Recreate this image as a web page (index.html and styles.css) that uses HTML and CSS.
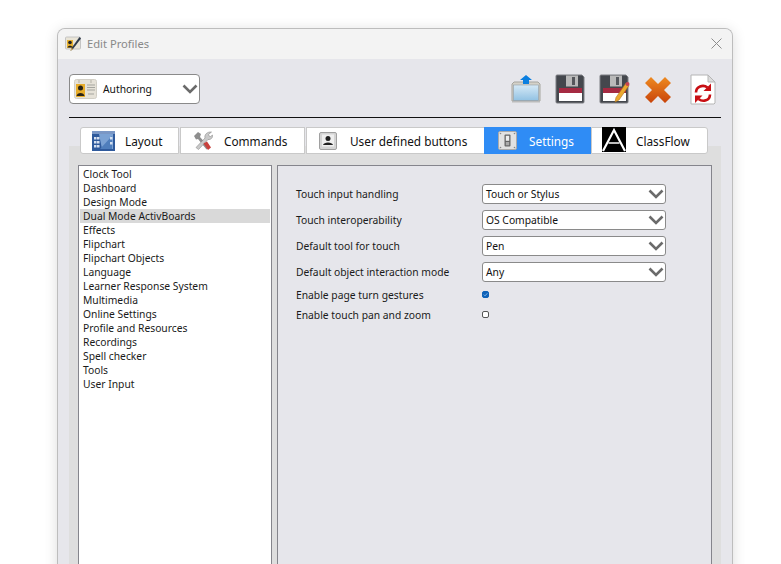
FILE: index.html
```html
<!DOCTYPE html>
<html lang="en">
<head>
<meta charset="utf-8">
<title>Edit Profiles</title>
<link rel="stylesheet" href="styles.css">
</head>
<body>
<div class="window">
  <header class="titlebar">
    <svg class="title-icon" width="17" height="17" viewBox="0 0 17 17"><rect x="0.5" y="2" width="15" height="12" rx="1" fill="#e9e4d6" stroke="#c4c4c4"/><rect x="2" y="5" width="6" height="8" fill="#e8b230"/><circle cx="5" cy="7.500" r="1.800" fill="#222"/><path d="M2.500 12.500c.4-2.400 4.600-2.400 5 0z" fill="#222"/><path d="M14.500 2 16 3.500 8 14 5.500 16 6.500 13z" fill="#2f3a4a"/><path d="M6.500 13 5.500 16 8 14z" fill="#e2b04a"/></svg>
    <span class="title-text">Edit Profiles</span>
    <svg class="close" width="11" height="11" viewBox="0 0 11 11"><path d="M.5.5l10 10M10.500.5l-10 10" stroke="#8c8c8c" stroke-width="1" fill="none"/></svg>
  </header>
  <div class="content">
    <div class="toolbar">
      <div class="combo">
        <svg class="combo-icon" width="23" height="20" viewBox="0 0 23 20"><rect x=".5" y=".5" width="22" height="19" rx="2" fill="#e6e2d8" stroke="#d2cfc6"/><rect x="2" y="5" width="9" height="13" fill="#e8ad2a"/><circle cx="6.500" cy="9" r="2.500" fill="#2a2418"/><path d="M2.500 17c.5-4 7.500-4 8 0z" fill="#2a2418"/><path d="M13 6h8M13 8.500h8M13 11h8M14 15h6" stroke="#a5a59f" fill="none"/><path d="M5 1v3M17 1v3" stroke="#b3b0a6" fill="none"/></svg>
        <span class="combo-text">Authoring</span>
        <svg class="chev" width="16" height="10" viewBox="0 0 16 10"><path d="M1.500 1.500 8 8l6.500-6.500" fill="none" stroke="#6b6b6b" stroke-width="2.600"/></svg>
      </div>
      <div class="actions">
        <svg class="a1" width="30" height="28" viewBox="0 0 30 28"><defs><linearGradient id="fold" x1="0" y1="0" x2="0" y2="1"><stop offset="0" stop-color="#d6e9f6"/><stop offset="1" stop-color="#92c2e3"/></linearGradient></defs><path d="M3 7h24l2 2v17H1V9z" fill="#d4d1c8" stroke="#a5a59f"/><rect x="2.500" y="10" width="25" height="15.500" fill="url(#fold)" stroke="#8f9ca5" stroke-width=".6"/><path d="M15 0l6 5h-3v4h-6V5H9z" fill="#0b7fe0"/><rect x="1" y="26" width="28" height="1.500" fill="#bbb"/></svg>
        <svg class="a2" width="30" height="30" viewBox="0 0 30 30"><path d="M2 1h25l2 2v25a1 1 0 0 1-1 1H2a1 1 0 0 1-1-1V2a1 1 0 0 1 1-1z" fill="#44474d" stroke="#7d7f83"/><rect x="11" y="1.500" width="12" height="11" fill="#b9b9b9"/><rect x="17" y="3" width="3" height="8" fill="#55575c"/><rect x="4" y="14" width="23" height="13" fill="#fff"/><rect x="4" y="14" width="23" height="5" fill="#a52a42"/></svg>
        <svg class="a3" width="31" height="30" viewBox="0 0 31 30"><path d="M2 1h25l2 2v25a1 1 0 0 1-1 1H2a1 1 0 0 1-1-1V2a1 1 0 0 1 1-1z" fill="#44474d" stroke="#7d7f83"/><rect x="11" y="1.500" width="12" height="11" fill="#b9b9b9"/><rect x="17" y="3" width="3" height="8" fill="#55575c"/><rect x="4" y="14" width="23" height="13" fill="#fff"/><rect x="4" y="14" width="23" height="5" fill="#a52a42"/><path d="M27 9l3 2.500L20 26l-4 2 1-4.500z" fill="#eba92f" stroke="#a9701b" stroke-width=".6"/><circle cx="28.500" cy="10" r="2" fill="#c8434f"/></svg>
        <svg class="a4" width="28" height="28" viewBox="0 0 28 28"><defs><linearGradient id="x" x1="0" y1="0" x2="0" y2="1"><stop offset="0" stop-color="#ee8a20"/><stop offset="1" stop-color="#c8440a"/></linearGradient></defs><path d="M7 1l7 7 7-7 6 6-7 7 7 7-6 6-7-7-7 7-6-6 7-7-7-7z" fill="url(#x)"/></svg>
        <svg class="a5" width="26" height="31" viewBox="0 0 26 31"><path d="M1 1h17l7 7v21l-1 1H1z" fill="#fff" stroke="#b5b5b5"/><path d="M18 1v7h7z" fill="#dcdcdc" stroke="#b5b5b5"/><path d="M6 18.500c0-6 7-8.500 11.500-5" fill="none" stroke="#c80f14" stroke-width="2.600"/><path d="M21 9.500v7.500h-7.500z" fill="#c80f14"/><path d="M20 20.500c0 6-7 8-11.500 4.500" fill="none" stroke="#c80f14" stroke-width="2.600"/><path d="M5 29v-7.500h7.500z" fill="#c80f14"/></svg>
      </div>
    </div>
    <div class="rule"></div>
    <nav class="tabs">
      <div class="tab t-layout">
        <svg width="23" height="20" viewBox="0 0 23 20"><rect width="23" height="20" fill="#2f5a9c"/><rect width="23" height="3" fill="#7a97c5"/><path d="M7 3h14v15H10z" fill="#7ba2d4"/><path d="M8 18 20 5v13z" fill="#4f7ebc"/><g fill="#d5e0f0"><rect x="2" y="6" width="2.500" height="2.500"/><rect x="5" y="6" width="2.500" height="2.500"/><rect x="2" y="10" width="2.500" height="2.500"/><rect x="5" y="10" width="2.500" height="2.500"/><rect x="2" y="14" width="2.500" height="2.500"/><rect x="5" y="14" width="2.500" height="2.500"/><rect x="18" y="6" width="2.500" height="2.500"/><rect x="18" y="11" width="2.500" height="2.500"/></g></svg>
        <span>Layout</span>
      </div>
      <div class="tab t-commands">
        <svg width="20" height="20" viewBox="0 0 20 20"><path d="M1 5l4-4 3 2-1 3 9 10-2.500 2.500L5 8 3 8.500z" fill="#8e8e8e"/><path d="M18.500 1 15.500 3.500l.5 1.500 1.500.5L19.500 4c.6 2.500-1.500 5-4.500 4.500L5.500 18.500 3 16.500 12 7c-1-3 2-6.500 6.500-6z" fill="#c9c9c9" stroke="#7d7d7d" stroke-width=".5"/><path d="M10.500 12.500 15 19l3-2.500-4-6z" fill="#c9403c"/></svg>
        <span>Commands</span>
      </div>
      <div class="tab t-user">
        <svg width="18" height="18" viewBox="0 0 18 18"><rect x=".5" y=".5" width="17" height="17" rx="1.500" fill="#d4d4d4" stroke="#a0a0a0"/><rect x="3" y="2.500" width="12" height="12" fill="#efefef"/><circle cx="9" cy="6.500" r="2.500" fill="#222"/><path d="M4 13c.6-3.500 9.400-3.500 10 0z" fill="#222"/></svg>
        <span>User defined buttons</span>
      </div>
      <div class="tab t-settings">
        <svg width="19" height="19" viewBox="0 0 19 19"><rect x=".5" y=".5" width="18" height="18" rx="1.500" fill="#e2e2e2" stroke="#aaa"/><g fill="#888"><circle cx="2.500" cy="2.500" r=".8"/><circle cx="16.500" cy="2.500" r=".8"/><circle cx="2.500" cy="16.500" r=".8"/><circle cx="16.500" cy="16.500" r=".8"/></g><rect x="6.500" y="3.500" width="6" height="12" rx="1" fill="#666"/><rect x="7.800" y="4.800" width="3.400" height="5" fill="#eee"/><rect x="7.800" y="11" width="3.400" height="3.300" fill="#aaa"/></svg>
        <span>Settings</span>
      </div>
      <div class="tab t-classflow">
        <svg class="cf-logo" width="24" height="25" viewBox="0 0 24 25"><rect width="24" height="25" fill="#000"/><path d="M1 24 12 3l11 21" fill="none" stroke="#fff" stroke-width="2.200"/><path d="M6.500 16h11" stroke="#fff" stroke-width="1.600"/></svg>
        <span>ClassFlow</span>
      </div>
    </nav>
    <div class="pane">
      <ul class="list">
        <li>Clock Tool</li>
        <li>Dashboard</li>
        <li>Design Mode</li>
        <li class="selected">Dual Mode ActivBoards</li>
        <li>Effects</li>
        <li>Flipchart</li>
        <li>Flipchart Objects</li>
        <li>Language</li>
        <li>Learner Response System</li>
        <li>Multimedia</li>
        <li>Online Settings</li>
        <li>Profile and Resources</li>
        <li>Recordings</li>
        <li>Spell checker</li>
        <li>Tools</li>
        <li>User Input</li>
      </ul>
      <section class="form">
        <div class="row"><span class="label">Touch input handling</span><div class="select"><span>Touch or Stylus</span><svg class="chev" width="16" height="10" viewBox="0 0 16 10"><path d="M1.500 1.500 8 8l6.500-6.500" fill="none" stroke="#6b6b6b" stroke-width="2.600"/></svg></div></div>
        <div class="row"><span class="label">Touch interoperability</span><div class="select"><span>OS Compatible</span><svg class="chev" width="16" height="10" viewBox="0 0 16 10"><path d="M1.500 1.500 8 8l6.500-6.500" fill="none" stroke="#6b6b6b" stroke-width="2.600"/></svg></div></div>
        <div class="row"><span class="label">Default tool for touch</span><div class="select"><span>Pen</span><svg class="chev" width="16" height="10" viewBox="0 0 16 10"><path d="M1.500 1.500 8 8l6.500-6.500" fill="none" stroke="#6b6b6b" stroke-width="2.600"/></svg></div></div>
        <div class="row last-select"><span class="label">Default object interaction mode</span><div class="select"><span>Any</span><svg class="chev" width="16" height="10" viewBox="0 0 16 10"><path d="M1.500 1.500 8 8l6.500-6.500" fill="none" stroke="#6b6b6b" stroke-width="2.600"/></svg></div></div>
        <div class="row check-row"><span class="label">Enable page turn gestures</span><span class="check on"><svg width="7" height="7" viewBox="0 0 7 7"><path d="M1.800 3.600 3 4.800 5.300 2.300" fill="none" stroke="#8fc0ec" stroke-width=".9"/></svg></span></div>
        <div class="row check-row"><span class="label">Enable touch pan and zoom</span><span class="check"></span></div>
      </section>
    </div>
  </div>
</div>
</body>
</html>
```
FILE: styles.css
```css
* { box-sizing: border-box; }
html, body { margin: 0; height: 100%; overflow: hidden; background: #fff; }
body { padding: 28px 0 0 57px; font-family: "Noto Sans", "Open Sans", sans-serif; color: #1c1c1c; }
.window { width: 676px; height: 560px; background: #e6e6eb; border: 1px solid #bdbdbd; border-bottom: 0; border-radius: 8px 8px 0 0; box-shadow: 0 2px 14px rgba(0,0,0,.14); display: flex; flex-direction: column; overflow: hidden; }
.titlebar { height: 30px; flex: none; background: #f3f3f3; display: flex; align-items: center; padding: 0 10px 2px 7px; }
.title-icon { flex: none; }
.title-text { font-size: 11.200px; color: #888; margin-left: 5px; flex: 1; }
.close { flex: none; }
.content { flex: 1; padding: 15px 11px 0; display: flex; flex-direction: column; }
.toolbar { display: flex; justify-content: space-between; height: 31px; flex: none; }
.combo { width: 131px; height: 30px; background: #fff; border: 1px solid #8a8a8a; border-radius: 4px; display: flex; align-items: center; padding: 0 1px 0 4px; }
.combo-text { font-size: 10.300px; margin-left: 6px; flex: 1; color: #111; }
.actions { display: flex; align-items: flex-start; padding-right: 5px; }
.actions svg { display: block; flex: none; }
.a1 { margin-top: 1px; margin-right: 14px; }
.a2 { margin-right: 14px; }
.a3 { margin-right: 14px; }
.a4 { margin-top: 2px; margin-right: 18px; }
.chev { display: block; flex: none; }
.rule { height: 1px; background: #111; margin-top: 12px; flex: none; }
.tabs { display: flex; margin: 9px 0 -8px 11px; height: 27px; position: relative; flex: none; }
.tab { background: #fff; border: 1px solid #c9c9c9; border-right: 0; display: flex; align-items: center; font-size: 11.800px; color: #111; height: 27px; flex: none; }
.tab svg { flex: none; display: block; }
.tab span { padding-top: 1px; }
.t-layout { width: 99px; padding-left: 11px; gap: 10px; border-radius: 3px 0 0 3px; border-right: 1px solid #c9c9c9; margin-right: 1px; }
.t-commands { width: 125px; padding-left: 12px; gap: 11px; border-right: 1px solid #c9c9c9; margin-right: 1px; }
.t-user { width: 178px; padding-left: 12px; gap: 13px; }
.t-settings { width: 107px; padding-left: 13px; gap: 12px; background: #2f8cf5; color: #fff; border-color: #2f8cf5; }
.t-classflow { width: 117px; padding-left: 10px; gap: 10px; border: 1px solid #c9c9c9; border-radius: 0 3px 3px 0; }
.tab .cf-logo { align-self: flex-start; margin-top: -1px; }
.pane { flex: 1; background: #dedede; padding: 19px 9px 0; display: flex; gap: 5px; min-height: 0; }
.list { list-style: none; margin: 0; padding: 1px; width: 194px; background: #fff; border: 1px solid #85858c; border-bottom: 0; flex: none; }
.list li { height: 14px; line-height: 14px; font-size: 10.300px; padding-left: 3px; color: #1a1a1a; white-space: nowrap; }
.list li.selected { background: #d9d9d9; }
.form { flex: 1; background: #e6e6eb; border: 1px solid #85858c; border-bottom: 0; padding: 18px 0 0 18px; }
.row { display: flex; align-items: center; height: 20px; margin-bottom: 6px; }
.last-select { margin-bottom: 3px; }
.label { width: 186px; font-size: 10.300px; color: #1a1a1a; white-space: nowrap; flex: none; }
.select { width: 184px; height: 20px; background: #fff; border: 1px solid #8a8a8a; border-radius: 3px; display: flex; align-items: center; justify-content: space-between; padding: 0 1px 0 3px; font-size: 10.300px; color: #111; }
.check-row { margin-bottom: 0; }
.check { width: 7px; height: 7px; border: 1px solid #555; border-radius: 2px; background: #fff; display: block; position: relative; margin-top: -1px; }
.check.on { background: #0f62b8; border-color: #0f62b8; }
.check svg { position: absolute; left: -1px; top: -1px; display: block; }
```
